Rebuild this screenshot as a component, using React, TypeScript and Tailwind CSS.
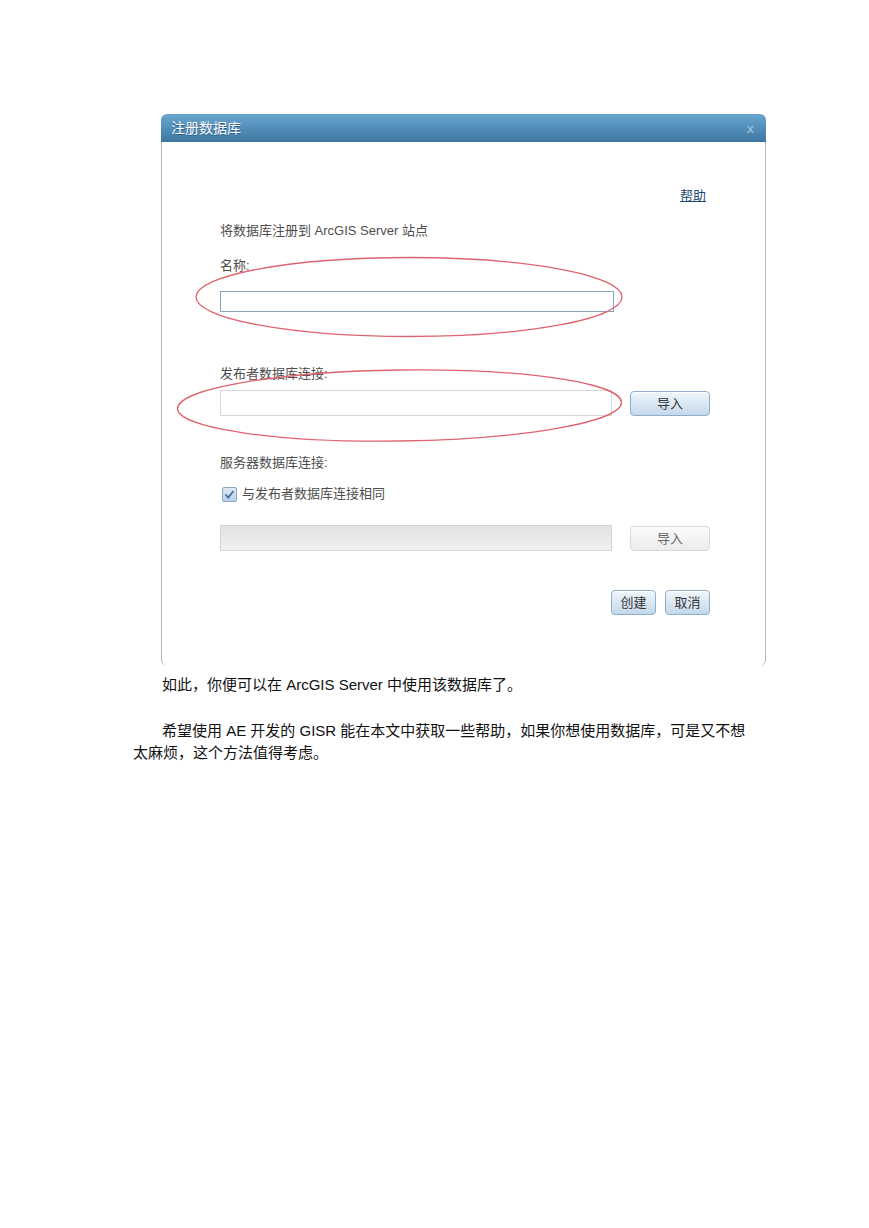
import React from 'react'

function BlueButton({ children, className }: { children: React.ReactNode; className: string }) {
  return (
    <button
      className={`h-[25px] rounded-[4px] border border-[#8eaecb] bg-gradient-to-b from-[#f1f6fb] to-[#c4d8ec] text-[13px] leading-none text-[#333] shadow-[inset_0_1px_0_#ffffff] ${className}`}
    >
      {children}
    </button>
  )
}

function CheckBox() {
  return (
    <svg width="15" height="15" viewBox="0 0 15 15">
      <defs>
        <linearGradient id="cb" x1="0" y1="0" x2="0" y2="1">
          <stop offset="0" stopColor="#dfeaf5" />
          <stop offset="1" stopColor="#b9cfe4" />
        </linearGradient>
      </defs>
      <rect x="0.5" y="0.5" width="14" height="14" rx="1.5" fill="url(#cb)" stroke="#8aa7c4" />
      <path d="M3.5 7.5 L6.3 10.5 L11.5 4" fill="none" stroke="#3f6f9c" strokeWidth="1.8" />
    </svg>
  )
}

export default function App() {
  return (
    <div className="min-h-[1228px] bg-white font-['Liberation_Sans','Noto_Sans_CJK_SC',sans-serif]">
      <div className="pt-[114px] pl-[161px]">
        <div className="relative w-[605px]">
          {/* 标题栏 */}
          <div className="flex h-[28px] items-center justify-between rounded-t-[6px] bg-gradient-to-b from-[#69a7d1] to-[#3d76a1] pl-[10px] pr-[12px]">
            <span className="text-[14px] leading-none text-white [text-shadow:0_1px_0_#2f5f85]">注册数据库</span>
            <span className="text-[13px] font-bold leading-none text-[#93b9d6]">x</span>
          </div>

          {/* 对话框内容 */}
          <div className="flex h-[524px] flex-col rounded-b-[6px] border-x border-[#b8b8b8] bg-white pl-[58px] pr-[55px] text-[13px] text-[#4d4d4d]">
            <div className="mt-[46px] flex justify-end">
              <a className="mr-[4px] leading-[16px] text-[#1d4a77] underline">帮助</a>
            </div>
            <div className="mt-[19px] leading-[16px]">将数据库注册到 ArcGIS Server 站点</div>
            <div className="mt-[19px] leading-[16px]">名称:</div>
            <div className="mt-[17px] h-[21px] w-[394px] border border-[#8aa3bc] bg-white" />

            <div className="mt-[54px] leading-[16px]">发布者数据库连接:</div>
            <div className="mt-[8px] flex items-center gap-[18px]">
              <div className="h-[26px] w-[392px] border border-[#d6d6d6] bg-white" />
              <BlueButton className="w-[80px]">导入</BlueButton>
            </div>

            <div className="mt-[39px] leading-[16px]">服务器数据库连接:</div>
            <div className="mt-[15px] flex items-center gap-[5px] pl-[2px] leading-[16px]">
              <CheckBox />
              <span>与发布者数据库连接相同</span>
            </div>
            <div className="mt-[23px] flex items-center gap-[18px]">
              <div className="h-[26px] w-[392px] border border-[#d4d4d4] bg-gradient-to-b from-[#e3e3e3] to-[#f0f0f0]" />
              <button className="h-[25px] w-[80px] rounded-[4px] border border-[#d8d8d8] bg-gradient-to-b from-[#fbfbfb] to-[#ececec] text-[13px] leading-none text-[#666]">
                导入
              </button>
            </div>

            <div className="mt-[39px] flex justify-end gap-[9px]">
              <BlueButton className="w-[45px]">创建</BlueButton>
              <BlueButton className="w-[45px]">取消</BlueButton>
            </div>
          </div>

          {/* 红色标注 */}
          <svg className="pointer-events-none absolute left-0 top-0" width="605" height="552" viewBox="0 0 605 552">
            <ellipse cx="248" cy="183" rx="213" ry="39.5" fill="none" stroke="#e0646e" strokeWidth="1.3" />
            <ellipse cx="238.5" cy="291.5" rx="222" ry="35.5" fill="none" stroke="#e0646e" strokeWidth="1.3" transform="rotate(-0.8 238.5 291.5)" />
          </svg>
        </div>
      </div>

      <div className="ml-[133px] mt-[8px] w-[624px] text-[15px] leading-[22px] text-[#111]">
        <p className="indent-[29px]">如此，你便可以在 ArcGIS Server 中使用该数据库了。</p>
        <p className="mt-[24px] indent-[29px]">
          希望使用 AE 开发的 GISR 能在本文中获取一些帮助，如果你想使用数据库，可是又不想太麻烦，这个方法值得考虑。
        </p>
      </div>
    </div>
  )
}
